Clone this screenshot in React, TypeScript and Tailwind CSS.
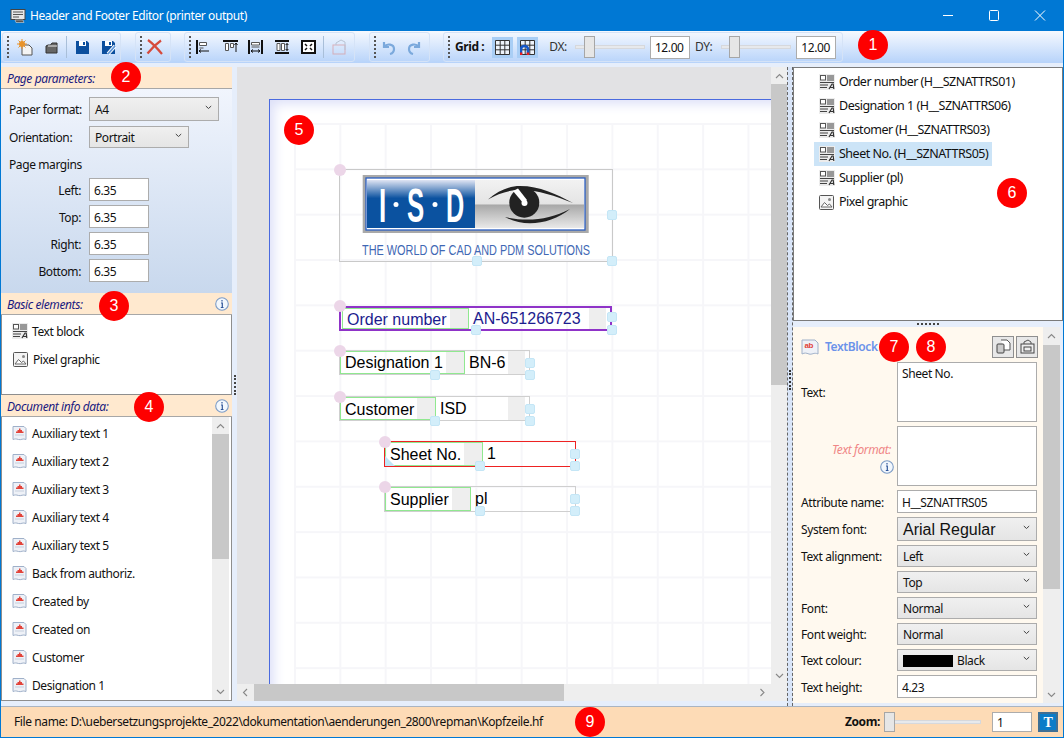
import React from "react";

const ui = "font-['Noto_Sans','Open_Sans',sans-serif] text-[12px] tracking-[-0.4px] text-[#111]";
const arial = "font-['Liberation_Sans',Arial,sans-serif]";

function Chevron({ dir = "down", color = "#555" }: { dir?: "down" | "up" | "left" | "right"; color?: string }) {
  const d = { down: "M1 1l3.500 3.500L8 1", up: "M1 5l3.500-3.500L8 5", left: "M5 1L1.500 4.500 5 8", right: "M1.500 1L5 4.500 1.500 8" }[dir];
  const box = dir === "down" || dir === "up" ? "0 0 9 6" : "0 0 6.500 9";
  const w = dir === "down" || dir === "up" ? 9 : 6.5;
  const h = dir === "down" || dir === "up" ? 6 : 9;
  return (
    <svg width={w} height={h} viewBox={box} fill="none" stroke={color} strokeWidth="1.100">
      <path d={d} />
    </svg>
  );
}

function SmallChevron() {
  return (
    <svg width="7" height="5" viewBox="0 0 7 5" fill="none" stroke="#444" className="mb-[3px] shrink-0">
      <path d="M.8 1l2.700 2.500L6.200 1" />
    </svg>
  );
}

function TextBlockIcon() {
  return (
    <svg width="16" height="16" viewBox="0 0 16 16" className="shrink-0">
      <rect width="16" height="16" fill="#ececec" />
      <rect x="1.500" y="1.500" width="5" height="4.500" fill="#fff" stroke="#555" />
      <path d="M8 2h7M8 4h7M8 6h7M1 8.500h14M1 11h8M1 13.500h7" stroke="#444" strokeWidth="1.200" />
      <path d="M10 15l3-5h1.200l.6 5M11.500 13.500h3" stroke="#333" strokeWidth="1.200" fill="none" />
    </svg>
  );
}

function PixelIcon() {
  return (
    <svg width="15" height="15" viewBox="0 0 15 15" className="shrink-0">
      <rect x="0.500" y="0.500" width="14" height="14" rx="1" fill="#f4f4f4" stroke="#555" />
      <circle cx="10.500" cy="4.500" r="1.500" fill="#888" />
      <path d="M2 12l3.500-4.500 3 3 2-1.500L13 12z" fill="#fff" stroke="#666" />
    </svg>
  );
}

function DocIcon() {
  return (
    <svg width="15" height="16" viewBox="0 0 15 16" className="shrink-0">
      <path d="M1 1.500h11l2 2v11c-3-1.500-5 .8-7.500 0S3 13.800 1 14.500z" fill="#eef1f7" stroke="#9fb0c9" />
      <path d="M4 6.500h1.500V5H7V3.500h1.500V5H10v1.500h1.500V8H4z" fill="#e2433a" />
      <path d="M3 10h9" stroke="#c6cfdd" />
    </svg>
  );
}

function InfoIcon({ className = "" }: { className?: string }) {
  return (
    <svg width="14" height="14" viewBox="0 0 14 14" className={className}>
      <circle cx="7" cy="7" r="6.300" fill="#f2f7fd" stroke="#7d9cc6" strokeWidth="1.100" />
      <path d="M7 3v1.500M6 6h1.300v4.300M5.800 10.500h2.700" stroke="#30569a" strokeWidth="1.200" fill="none" />
    </svg>
  );
}

function Dots() {
  return <div className="h-[22px] w-[2px] shrink-0 border-l-2 border-dotted border-[#555]" />;
}

function Sep() {
  return <div className="h-[22px] w-px shrink-0 bg-[#a9bfd9]" />;
}

function Select({ children, className = "" }: { children: React.ReactNode; className?: string }) {
  return (
    <div className={`flex items-center justify-between border border-[#acacac] bg-gradient-to-b from-[#f0f0f0] to-[#e5e5e5] pl-[5px] pr-[6px] ${className}`}>
      <span className="flex min-w-0 items-center pt-[2px]">{children}</span>
      <SmallChevron />
    </div>
  );
}

function Input({ children, className = "" }: { children: React.ReactNode; className?: string }) {
  return <div className={`flex items-center border border-[#acacac] bg-white pl-[4px] pt-[2px] ${className}`}>{children}</div>;
}

function Slider({ thumb }: { thumb: string }) {
  return (
    <div className="relative flex h-[22px] w-[70px] items-center">
      <div className="h-[4px] w-full border border-[#d6d8dc] bg-[#e7e9ec]" />
      <div className={`absolute top-0 h-[22px] w-[11px] border border-[#a6a6a6] bg-[#e6e6e6] ${thumb}`} />
    </div>
  );
}

function Header({ children, info }: { children: React.ReactNode; info?: boolean }) {
  return (
    <div className="flex h-[22px] shrink-0 items-center justify-between border-b border-[#a7a7a7] bg-[#ffe9cf] pl-[6px] pr-[3px] italic text-[#1a1a80]">
      <span className="pt-[2px]">{children}</span>
      {info && <InfoIcon />}
    </div>
  );
}

function Margin({ label, mt }: { label: string; mt: string }) {
  return (
    <div className={`flex items-center ${mt}`}>
      <span className="w-[72px] pt-[2px] text-right">{label}</span>
      <Input className="ml-[8px] h-[23px] w-[60px]">6.35</Input>
    </div>
  );
}

function PropRow({ label, children, className = "" }: { label?: string; children: React.ReactNode; className?: string }) {
  return (
    <div className={`flex items-center ${className}`}>
      <span className="w-[96px] shrink-0 pt-[2px]">{label}</span>
      {children}
    </div>
  );
}

function Handle({ className }: { className: string }) {
  return <div className={`absolute h-[10px] w-[10px] rounded-[2px] border border-[#c4e6f6] bg-[#d3eefa] ${className}`} />;
}

function Pin({ className }: { className: string }) {
  return <div className={`absolute h-[12px] w-[12px] rounded-full bg-[#ecd6e8] ${className}`} />;
}

function Field({
  className,
  labelW,
  label,
  value,
  tail = false,
  labelText = "text-black",
  pad = "pl-[4px]",
}: {
  className: string;
  labelW: string;
  label: string;
  value: string;
  tail?: boolean;
  labelText?: string;
  pad?: string;
}) {
  return (
    <div className={`absolute flex tracking-normal ${arial} text-[16px] ${labelText} ${className}`}>
      <div className={`flex h-full shrink-0 items-stretch justify-between border border-[#90e890] ${labelW}`}>
        <span className={`flex items-center ${pad}`}>{label}</span>
        <span className="h-full w-[18px] bg-[#eeeeee]" />
      </div>
      <div className="flex h-full min-w-0 flex-1 items-center pl-[4px]">
        <span>{value}</span>
        {tail && <span className="ml-auto mr-[4px] h-full w-[17px] bg-[#eeeeee]" />}
      </div>
    </div>
  );
}

function Badge({ n, className }: { n: number; className: string }) {
  return (
    <div className={`absolute flex h-[30px] w-[30px] items-center justify-center rounded-full bg-[#fe0000] font-['Liberation_Sans',sans-serif] text-[16px] tracking-normal text-white ${className}`}>
      {n}
    </div>
  );
}

function ToggleBtn({ magnet }: { magnet?: boolean }) {
  return (
    <div className="relative flex h-[21px] w-[21px] items-center justify-center bg-[#a9cef5]">
      <svg width="15" height="15" viewBox="0 0 15 15">
        <path d="M.5.5h14v14H.5zM.5 5.200h14M.5 9.800h14M5.200.5v14M9.800.5v14" fill="#eef4fb" stroke="#333" strokeWidth="1" />
        {magnet && <path d="M1 15V9.500a3.500 3.500 0 0 1 7 0V15" fill="none" stroke="#1457c8" strokeWidth="2.600" />}
        {magnet && <path d="M-.3 12.500h2.600V15H-.3zM6.700 12.500h2.600V15H6.700z" fill="#ee1c1c" />}
      </svg>
    </div>
  );
}

const docs = [
  "Auxiliary text 1",
  "Auxiliary text 2",
  "Auxiliary text 3",
  "Auxiliary text 4",
  "Auxiliary text 5",
  "Back from authoriz.",
  "Created by",
  "Created on",
  "Customer",
  "Designation 1",
];

const tree = [
  "Order number (H__SZNATTRS01)",
  "Designation 1 (H__SZNATTRS06)",
  "Customer (H__SZNATTRS03)",
  "Sheet No. (H__SZNATTRS05)",
  "Supplier (pl)",
];

export default function App() {
  return (
    <div className={`relative flex h-[738px] w-[1064px] flex-col overflow-hidden border-x border-b border-[#0078d4] bg-[#e6eefb] ${ui}`}>
      {/* title bar */}
      <div className="flex h-[31px] shrink-0 items-center bg-[#0078d4] text-white">
        <svg width="16" height="16" viewBox="0 0 16 16" className="ml-[9px]">
          <rect x="1" y="1.500" width="14" height="10" fill="#e8e8e8" stroke="#444" />
          <path d="M3 4h10M3 6.500h10M3 9h6" stroke="#555" />
          <path d="M5 12h8l1 2.500H6z" fill="#555" stroke="#eee" strokeWidth=".5" />
        </svg>
        <span className="ml-[4px] pt-[1px]">Header and Footer Editor (printer output)</span>
        <div className="ml-auto flex items-center">
          <svg width="46" height="31" viewBox="0 0 46 31"><path d="M18 15.500h10" stroke="#fff" /></svg>
          <svg width="46" height="31" viewBox="0 0 46 31"><rect x="18.500" y="10.500" width="9" height="10" rx="1" fill="none" stroke="#fff" /></svg>
          <svg width="46" height="31" viewBox="0 0 46 31"><path d="M18 10.500l10 10M28 10.500l-10 10" stroke="#fff" /></svg>
        </div>
      </div>

      {/* toolbar */}
      <div className="flex h-[32px] shrink-0 items-center bg-gradient-to-b from-[#f6f9fe] to-[#b7d3fa]">
        <div className="ml-[1px] flex h-[30px] w-[119px] items-center rounded-[3px] border border-[#d5e3f7] pl-[4px]">
          <Dots />
          <svg width="16" height="17" viewBox="0 0 16 17" className="ml-[8px]">
            <path d="M5 6h7l3 3v7H5z" fill="#f4f4f4" stroke="#555" />
            <circle cx="5" cy="5" r="3" fill="#e8932b" />
            <path d="M5 0v10M0 5h10M1.500 1.500l7 7M8.500 1.500l-7 7" stroke="#e8932b" />
          </svg>
          <svg width="14" height="13" viewBox="0 0 14 13" className="ml-[12px]">
            <path d="M1 5V12h11V2H7L5.500 4H3z" fill="#666" stroke="#333" />
            <path d="M3 5h9" stroke="#eee" />
          </svg>
          <div className="ml-[7px]"><Sep /></div>
          <svg width="15" height="15" viewBox="0 0 15 15" className="ml-[8px]">
            <path d="M1 1h11l2 2v11H1z" fill="#0c4f9e" />
            <rect x="4" y="1" width="7" height="5" fill="#fff" />
            <rect x="8" y="2" width="2" height="3" fill="#0c4f9e" />
          </svg>
          <svg width="16" height="15" viewBox="0 0 16 15" className="ml-[11px]">
            <path d="M1 1h11l2 2v11H1z" fill="#0c4f9e" />
            <rect x="4" y="1" width="7" height="5" fill="#fff" />
            <rect x="8" y="2" width="2" height="3" fill="#0c4f9e" />
            <path d="M7 14l7-8" stroke="#fff" strokeWidth="3.500" />
            <path d="M7 14l7-8" stroke="#5c95d8" strokeWidth="1.800" />
          </svg>
        </div>
        <div className="ml-[14px] flex h-[30px] w-[36px] items-center rounded-[3px] border border-[#d5e3f7] pl-[4px]">
          <Dots />
          <svg width="17" height="16" viewBox="0 0 17 16" className="ml-[4px]">
            <path d="M2 1c4 3 9 8 14 14M15 1.500C10 5 5 10 1.500 14.500" stroke="#d64a3c" strokeWidth="2.200" fill="none" />
          </svg>
        </div>
        <div className="ml-[13px] flex h-[30px] w-[171px] items-center rounded-[3px] border border-[#d5e3f7] pl-[4px]">
          <Dots />
          <svg width="15" height="14" viewBox="0 0 15 14" className="ml-[5px]">
            <path d="M1 0v14" stroke="#111" strokeWidth="2" />
            <path d="M3.500 2.500h7v3h-7zM3.500 8h4" fill="#fff" stroke="#555" />
            <path d="M3 11h10M3 11l2-1.500M3 11l2 1.500" stroke="#111" fill="none" />
          </svg>
          <svg width="15" height="14" viewBox="0 0 15 14" className="ml-[12px]">
            <path d="M0 1h15" stroke="#111" strokeWidth="2" />
            <path d="M2.500 3.500h3v7h-3zM7.500 3.500h3v4h-3z" fill="#fff" stroke="#555" />
            <path d="M13 3v9M13 3l-1.500 2M13 3l1.500 2" stroke="#111" fill="none" />
          </svg>
          <svg width="15" height="14" viewBox="0 0 15 14" className="ml-[10px]">
            <path d="M1 0v14M14 0v14" stroke="#111" strokeWidth="2" />
            <path d="M3.500 2.500h8v2.500h-8zM3.500 7h8" fill="#fff" stroke="#555" />
            <path d="M3 11h9M3 11l2-1.500M3 11l2 1.500M12 11l-2-1.500M12 11l-2 1.500" stroke="#111" fill="none" />
          </svg>
          <svg width="14" height="14" viewBox="0 0 14 14" className="ml-[12px]">
            <path d="M0 1h14M0 13h14" stroke="#111" strokeWidth="2" />
            <path d="M2 3.500h3v7H2zM6.500 3.500h3v7h-3z" fill="#fff" stroke="#555" />
            <path d="M12 3.500v7M12 3.500L10.700 5M12 3.500L13.300 5M12 10.500L10.700 9M12 10.500L13.300 9" stroke="#111" fill="none" />
          </svg>
          <svg width="15" height="14" viewBox="0 0 15 14" className="ml-[12px]">
            <rect x="1" y="1" width="13" height="12" fill="#fff" stroke="#111" strokeWidth="2" />
            <path d="M4 4l2 2M11 4L9 6M4 10l2-2M11 10L9 8" stroke="#111" strokeWidth="1.500" />
          </svg>
          <div className="ml-[7px]"><Sep /></div>
          <svg width="15" height="16" viewBox="0 0 15 16" className="ml-[8px] opacity-70">
            <rect x="1" y="6" width="12" height="9" fill="none" stroke="#d99a9f" />
            <path d="M4 6V4l5-3 4 2v8" fill="none" stroke="#a9b4c4" />
          </svg>
        </div>
        <div className="ml-[14px] flex h-[30px] w-[61px] items-center rounded-[3px] border border-[#d5e3f7] pl-[4px]">
          <Dots />
          <svg width="15" height="15" viewBox="0 0 15 15" className="ml-[5px]">
            <path d="M3 2v5h5M3 7c3-4 10-3 10 2 0 3-2 4.500-4 5" fill="none" stroke="#7ba9dc" strokeWidth="2.200" />
          </svg>
          <svg width="15" height="15" viewBox="0 0 15 15" className="ml-[11px]">
            <path d="M12 2v5H7M12 7C9 3 2 4 2 9c0 3 2 4.500 4 5" fill="none" stroke="#7ba9dc" strokeWidth="2.200" />
          </svg>
        </div>
        <div className="ml-[13px] flex h-[30px] w-[400px] items-center rounded-[3px] border border-[#d5e3f7] pl-[4px]">
          <Dots />
          <span className="ml-[5px] font-bold">Grid :</span>
          <div className="ml-[8px]"><ToggleBtn /></div>
          <div className="ml-[4px]"><ToggleBtn magnet /></div>
          <span className="ml-[11px] text-[#333]">DX:</span>
          <div className="ml-[8px]"><Slider thumb="left-[9px]" /></div>
          <Input className="ml-[5px] h-[23px] w-[40px]">12.00</Input>
          <span className="ml-[5px] text-[#333]">DY:</span>
          <div className="ml-[9px]"><Slider thumb="left-[8px]" /></div>
          <Input className="ml-[5px] h-[23px] w-[40px]">12.00</Input>
        </div>
      </div>

      {/* body */}
      <div className="mt-[4px] flex min-h-0 flex-1">
        {/* left column */}
        <div className="flex w-[231px] shrink-0 flex-col">
          <Header>Page parameters:</Header>
          <div className="h-[204px] shrink-0 bg-gradient-to-b from-[#f1f5fd] to-[#c8d8ed] pl-[8px] pt-[8px]">
            <div className="flex items-center">
              <span className="w-[81px] pt-[2px]">Paper format:</span>
              <Select className="ml-[-1px] h-[24px] w-[130px]">A4</Select>
            </div>
            <div className="mt-[5px] flex items-center">
              <span className="w-[81px] pt-[2px]">Orientation:</span>
              <Select className="ml-[-1px] h-[22px] w-[100px]">Portrait</Select>
            </div>
            <div className="mt-[8px]">Page margins</div>
            <div className="mt-[4px]">
              <Margin label="Left:" mt="" />
              <Margin label="Top:" mt="mt-[4px]" />
              <Margin label="Right:" mt="mt-[4px]" />
              <Margin label="Bottom:" mt="mt-[4px]" />
            </div>
          </div>
          <Header info>Basic elements:</Header>
          <div className="h-[80px] shrink-0 border-x border-b border-[#8e8e8e] bg-white pt-[2px]">
            <div className="flex h-[28px] items-center gap-[4px] pl-[10px]"><TextBlockIcon /><span className="pt-[2px]">Text block</span></div>
            <div className="flex h-[28px] items-center gap-[5px] pl-[11px]"><PixelIcon /><span className="pt-[2px]">Pixel graphic</span></div>
          </div>
          <Header info>Document info data:</Header>
          <div className="flex min-h-0 flex-1 border-x border-[#8e8e8e]">
            <div className="min-w-0 flex-1 overflow-hidden bg-white pt-[2px]">
              {docs.map((d) => (
                <div key={d} className="flex h-[28px] items-center gap-[5px] pl-[10px]"><DocIcon /><span className="pt-[2px]">{d}</span></div>
              ))}
            </div>
            <div className="flex w-[17px] shrink-0 flex-col bg-[#eeeeee]">
              <div className="flex h-[17px] items-center justify-center"><Chevron dir="up" color="#888" /></div>
              <div className="h-[125px] bg-[#c8c8c8]" />
              <div className="mt-auto flex h-[17px] items-center justify-center"><Chevron color="#888" /></div>
            </div>
            <div className="w-[2px] shrink-0 bg-white" />
          </div>
          <div className="h-[6px] shrink-0 border-t border-[#8e8e8e]" />
        </div>

        {/* left splitter */}
        <div className="flex w-[5px] shrink-0 flex-col items-center pt-[308px]">
          <div className="h-[20px] w-[2px] border-l-2 border-dotted border-[#444]" />
        </div>

        {/* canvas */}
        <div className="flex w-[550px] shrink-0 flex-col pb-[5px]">
          <div className="flex min-h-0 flex-1">
            <div className="relative min-w-0 flex-1 overflow-hidden bg-[#e2e2e4]">
              <div className="absolute left-[32px] top-[32px] h-[700px] w-[700px] border-l border-t border-[#4a6adf] bg-white shadow-[inset_10px_10px_12px_-6px_#dde0f8]" />
              <div className="absolute left-[57px] top-[56px] h-[700px] w-[700px] bg-[linear-gradient(to_right,#f6f6f9_2px,transparent_2px),linear-gradient(to_bottom,#f6f6f9_2px,transparent_2px)] bg-[length:45.35px_45.35px]" />

              {/* logo element */}
              <div className="absolute left-[102px] top-[102px] h-[93px] w-[274px] border border-[#c9c9c9]">
                <svg width="272" height="66" viewBox="0 0 272 66" className="absolute left-0 top-0">
                  <defs>
                    <linearGradient id="blueLogo" x1="0" y1="0" x2="0" y2="1">
                      <stop offset="0" stopColor="#dfe4f3" />
                      <stop offset="0.38" stopColor="#0b52a0" />
                      <stop offset="1" stopColor="#0b52a0" />
                    </linearGradient>
                    <linearGradient id="greyLogo" x1="0" y1="0" x2="0" y2="1">
                      <stop offset="0" stopColor="#f2f2f2" />
                      <stop offset="0.5" stopColor="#e4e4e4" />
                      <stop offset="0.52" stopColor="#a8a8a8" />
                      <stop offset="1" stopColor="#e9e9e9" />
                    </linearGradient>
                  </defs>
                  <rect x="22.700" y="5" width="226" height="58" fill="#a9a9a9" />
                  <rect x="26" y="8" width="219" height="52" fill="#fff" stroke="#2b5fc0" strokeWidth="1.300" />
                  <rect x="27" y="10" width="108" height="48" fill="url(#blueLogo)" />
                  <rect x="135" y="10" width="109" height="48" fill="url(#greyLogo)" />
                  <g fill="#fff" fontFamily="Liberation Sans" fontWeight="700" fontSize="48">
                    <text x="39" y="52" textLength="7" lengthAdjust="spacingAndGlyphs">I</text>
                    <text x="67" y="52" textLength="17" lengthAdjust="spacingAndGlyphs">S</text>
                    <text x="106" y="52" textLength="18" lengthAdjust="spacingAndGlyphs">D</text>
                  </g>
                  <circle cx="56" cy="34.500" r="2.500" fill="#fff" />
                  <circle cx="95" cy="34.500" r="2.500" fill="#fff" />
                  <path d="M148 29.500C158 21 169 16 180 16c20 0 36 8 53 17-18-7-34-13-53-13-12 0-22 4-32 9.500z" fill="#222" />
                  <path d="M165 47c22 5 44 3 65-8-18 15-46 19-65 8z" fill="#222" />
                  <circle cx="184.300" cy="32.700" r="15" fill="#222" />
                  <path d="M173 21l5-2.500 9 11.500-3.500 3.500z" fill="#fff" />
                  <circle cx="184.500" cy="33" r="3" fill="#fff" />
                </svg>
                <span className="absolute left-[22px] top-[72px] origin-left scale-x-[0.726] whitespace-nowrap font-['Liberation_Sans',sans-serif] text-[15px] leading-[15px] tracking-normal text-[#3f68b4]">
                  THE WORLD OF CAD AND PDM SOLUTIONS
                </span>
              </div>
              <Pin className="left-[97px] top-[97px]" />
              <Handle className="left-[370px] top-[143px]" />
              <Handle className="left-[370px] top-[189px]" />
              <Handle className="left-[235px] top-[189px]" />

              {/* fields */}
              <Field className="left-[102px] top-[239px] h-[25px] w-[273px] border-2 border-[#8f33c8] pl-[1px]" labelW="w-[127px]" label="Order number" value="AN-651266723" tail labelText="text-[#1c1c8e]" pad="pl-[4px] pt-[2px]" />
              <Pin className="left-[97px] top-[233px]" />
              <Handle className="left-[370px] top-[245px]" />
              <Handle className="left-[370px] top-[258px]" />
              <Handle className="left-[234px] top-[258px]" />

              <Field className="left-[102px] top-[283px] h-[25px] w-[191px] border border-[#cfcfcf]" labelW="w-[125px]" label="Designation 1" value="BN-6" tail />
              <Pin className="left-[97px] top-[278px]" />
              <Handle className="left-[288px] top-[291px]" />
              <Handle className="left-[288px] top-[303px]" />
              <Handle className="left-[193px] top-[303px]" />

              <Field className="left-[102px] top-[329px] h-[25px] w-[191px] border border-[#cfcfcf]" labelW="w-[96px]" label="Customer" value="ISD" tail pad="pl-[4px] pt-[2px]" />
              <Pin className="left-[97px] top-[324px]" />
              <Handle className="left-[288px] top-[337px]" />
              <Handle className="left-[288px] top-[349px]" />
              <Handle className="left-[193px] top-[349px]" />

              <Field className="left-[147px] top-[374px] h-[26px] w-[192px] border border-[#ee2222]" labelW="w-[98px]" label="Sheet No." value="1" pad="pl-[4px] pt-[2px]" />
              <svg width="10" height="10" viewBox="0 0 10 10" className="absolute left-[148px] top-[389px]"><path d="M0 0l10 10H0z" fill="#bfe6f6" /></svg>
              <Pin className="left-[142px] top-[369px]" />
              <Handle className="left-[333px] top-[382px]" />
              <Handle className="left-[333px] top-[394px]" />
              <Handle className="left-[238px] top-[394px]" />

              <Field className="left-[147px] top-[419px] h-[26px] w-[192px] border border-[#cfcfcf]" labelW="w-[86px]" label="Supplier" value="pl" pad="pl-[4px] pt-[2px]" />
              <Pin className="left-[142px] top-[414px]" />
              <Handle className="left-[333px] top-[427px]" />
              <Handle className="left-[333px] top-[439px]" />
              <Handle className="left-[238px] top-[439px]" />
            </div>
            <div className="flex w-[16px] shrink-0 flex-col bg-[#eeeeee]">
              <div className="flex h-[17px] items-center justify-center"><Chevron dir="up" color="#888" /></div>
              <div className="h-[301px] bg-[#c8c8c8]" />
              <div className="mt-auto flex h-[17px] items-center justify-center"><Chevron color="#888" /></div>
            </div>
          </div>
          <div className="flex h-[17px] shrink-0 items-center bg-[#eeeeee] pr-[16px]">
            <div className="flex w-[17px] items-center justify-center"><Chevron dir="left" color="#888" /></div>
            <div className="h-full w-[310px] bg-[#c8c8c8]" />
            <div className="ml-auto flex w-[17px] items-center justify-center"><Chevron dir="right" color="#888" /></div>
          </div>
        </div>

        {/* right splitter: dashed focus frame with grip */}
        <div className="flex w-[6px] shrink-0 flex-col items-center border-x border-dashed border-[#666] bg-[#d9e5f8] pt-[303px]">
          <div className="h-[20px] w-[2px] border-l-2 border-dotted border-[#333]" />
        </div>

        {/* right column */}
        <div className="flex min-w-0 flex-1 flex-col">
          <div className="h-[254px] shrink-0 border border-[#7b7b7b] bg-white pt-[2px] text-[12.5px] tracking-[-0.5px]">
            {tree.map((t, i) => (
              <div
                key={t}
                className={`ml-[20px] flex h-[24px] w-[178px] items-center gap-[4px] pl-[5px] ${i === 3 ? "bg-[#cce4f7]" : ""}`}
              >
                <TextBlockIcon />
                <span className="whitespace-nowrap">{t}</span>
              </div>
            ))}
            <div className="ml-[20px] flex h-[24px] items-center gap-[5px] pl-[5px]"><PixelIcon />Pixel graphic</div>
          </div>
          <div className="flex h-[6px] shrink-0 items-center justify-center">
            <div className="h-[2px] w-[22px] border-t-2 border-dotted border-[#444]" />
          </div>
          <div className="mb-[3px] flex min-h-0 flex-1">
            <div className="min-w-0 flex-1 bg-[#fff9ef] pt-[8px]">
              <div className="flex h-[23px] items-center pl-[8px]">
                <svg width="18" height="18" viewBox="0 0 18 18">
                  <path d="M1 2h13l3 3v11c-4-2-6 1-9 0s-4-1.500-7 0z" fill="#eef1f7" stroke="#9fb0c9" />
                  <text x="3.500" y="10" fontSize="8" fontWeight="700" fill="#e2433a" fontFamily="Liberation Sans">ab</text>
                </svg>
                <span className="ml-[6px] font-semibold text-[#6c93ea]">TextBlock</span>
                <div className="ml-auto mr-[5px] flex gap-[2px]">
                  <div className="flex h-[22px] w-[22px] items-center justify-center border border-[#8f8f8f] bg-[#e8e8e8]">
                    <svg width="15" height="15" viewBox="0 0 15 15"><path d="M5 1h6l3 3v7H8" fill="#fff" stroke="#555" /><rect x="1" y="5" width="7" height="9" rx="1" fill="#ccc" stroke="#444" /></svg>
                  </div>
                  <div className="flex h-[22px] w-[22px] items-center justify-center border border-[#8f8f8f] bg-[#e8e8e8]">
                    <svg width="15" height="15" viewBox="0 0 15 15"><rect x="1" y="5" width="13" height="9" fill="#eee" stroke="#444" /><rect x="4" y="8" width="7" height="4" fill="none" stroke="#444" /><path d="M4 5V3l4-2 3 2v2" fill="none" stroke="#555" /></svg>
                  </div>
                </div>
              </div>
              <div className="pl-[8px] pt-[4px]">
                <PropRow label="Text:">
                  <div className="h-[60px] w-[140px] border border-[#acacac] bg-white pl-[4px] pt-[2px]">Sheet No.</div>
                </PropRow>
                <div className="mt-[4px] flex items-center">
                  <span className="mt-[2px] flex w-[90px] shrink-0 flex-col items-end italic text-[#f08686]">
                    Text format:
                    <InfoIcon className="mr-[-3px] mt-[1px]" />
                  </span>
                  <div className="ml-[6px] h-[60px] w-[140px] border border-[#acacac] bg-white" />
                </div>
                <PropRow label="Attribute name:" className="mt-[4px]"><Input className="h-[23px] w-[140px]">H__SZNATTRS05</Input></PropRow>
                <PropRow label="System font:" className="mt-[4px]">
                  <Select className={`h-[24px] w-[140px] text-[16px] tracking-normal ${arial}`}>Arial Regular</Select>
                </PropRow>
                <PropRow label="Text alignment:" className="mt-[4px]"><Select className="h-[22px] w-[140px]">Left</Select></PropRow>
                <PropRow className="mt-[4px]"><Select className="h-[22px] w-[140px]">Top</Select></PropRow>
                <PropRow label="Font:" className="mt-[4px]"><Select className="h-[22px] w-[140px]">Normal</Select></PropRow>
                <PropRow label="Font weight:" className="mt-[4px]"><Select className="h-[22px] w-[140px]">Normal</Select></PropRow>
                <PropRow label="Text colour:" className="mt-[4px]">
                  <Select className="h-[22px] w-[140px]"><span className="mr-[4px] h-[12px] w-[50px] bg-black" />Black</Select>
                </PropRow>
                <PropRow label="Text height:" className="mt-[4px]"><Input className="h-[23px] w-[140px]">4.23</Input></PropRow>
              </div>
            </div>
            <div className="flex w-[17px] shrink-0 flex-col bg-[#eeeeee]">
              <div className="flex h-[18px] items-center justify-center"><Chevron dir="up" color="#888" /></div>
              <div className="h-[244px] bg-[#c8c8c8]" />
              <div className="mt-auto flex h-[17px] items-center justify-center"><Chevron color="#888" /></div>
            </div>
            <div className="w-[3px] shrink-0" />
          </div>
        </div>
      </div>

      {/* status bar */}
      <div className="flex h-[31px] shrink-0 items-center border-t border-[#a9b4c2] bg-[#fddbb6]">
        <span className="ml-[13px]">File name: D:\uebersetzungsprojekte_2022\dokumentation\aenderungen_2800\repman\Kopfzeile.hf</span>
        <div className="ml-auto flex items-center">
          <span className="font-bold">Zoom:</span>
          <div className="relative ml-[4px] flex h-[20px] w-[97px] items-center">
            <div className="h-[4px] w-full border border-[#d6d8dc] bg-[#e7e9ec]" />
            <div className="absolute left-0 top-0 h-[20px] w-[11px] border border-[#a6a6a6] bg-[#e6e6e6]" />
          </div>
          <Input className="ml-[11px] h-[20px] w-[40px]">1</Input>
          <div className="ml-[6px] mr-[5px] flex h-[20px] w-[20px] items-center justify-center border-2 border-[#3f6f94] bg-[#0a7cc8] font-['Liberation_Serif',serif] text-[14px] font-bold text-white">T</div>
        </div>
      </div>

      {/* numbered annotations */}
      <Badge n={1} className="left-[857px] top-[30px]" />
      <Badge n={2} className="left-[110px] top-[62px]" />
      <Badge n={3} className="left-[98px] top-[291px]" />
      <Badge n={4} className="left-[133px] top-[392px]" />
      <Badge n={5} className="left-[283px] top-[115px]" />
      <Badge n={6} className="left-[996px] top-[178px]" />
      <Badge n={7} className="left-[878px] top-[332px]" />
      <Badge n={8} className="left-[915px] top-[332px]" />
      <Badge n={9} className="left-[574px] top-[707px]" />
    </div>
  );
}
